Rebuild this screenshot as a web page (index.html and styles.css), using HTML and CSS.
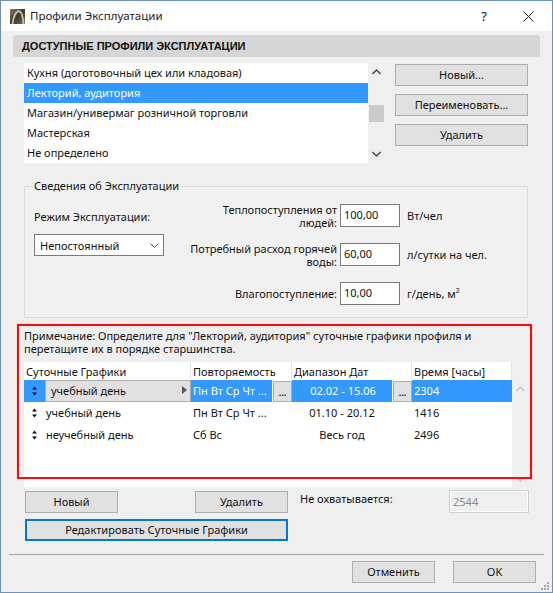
FILE: index.html
```html
<!DOCTYPE html>
<html lang="ru">
<head>
    <meta charset="UTF-8">
    <meta name="viewport" content="width=device-width, initial-scale=1.0">
    <title>Профили Эксплуатации</title>
    <link rel="stylesheet" href="styles.css">
</head>
<body>
    <div class="window">
        <div class="titlebar">
            <svg class="app-icon" width="15" height="15" viewBox="0 0 15 15">
                <defs>
                    <linearGradient id="icon-bg" x1="0" y1="0" x2="1" y2="1">
                        <stop offset="0" stop-color="#8a7c62"/>
                        <stop offset="0.5" stop-color="#3f3628"/>
                        <stop offset="1" stop-color="#7d7058"/>
                    </linearGradient>
                </defs>
                <rect width="15" height="15" fill="url(#icon-bg)"/>
                <path d="M2.500 15C3.500 8 5.500 2.500 9 2C12 2.500 13 8 13.500 15" fill="none" stroke="#c9bea6" stroke-width="1.800"/>
            </svg>
            <span class="title-text">Профили Эксплуатации</span>
            <span class="help-button">?</span>
            <svg class="close-button" width="11" height="11" viewBox="0 0 11 11">
                <path d="M0.500 0.500L10.500 10.500M10.500 0.500L0.500 10.500" stroke="#222" stroke-width="1"/>
            </svg>
        </div>

        <div class="section-head">ДОСТУПНЫЕ ПРОФИЛИ ЭКСПЛУАТАЦИИ</div>

        <div class="profiles">
            <ul class="profile-list">
                <li>Кухня (доготовочный цех или кладовая)</li>
                <li class="selected">Лекторий, аудитория</li>
                <li>Магазин/универмаг розничной торговли</li>
                <li>Мастерская</li>
                <li>Не определено</li>
            </ul>
            <div class="list-scroll">
                <svg width="9" height="6" viewBox="0 0 9 6"><path d="M0.500 5L4.500 1L8.500 5" fill="none" stroke="#555" stroke-width="1.600"/></svg>
                <div class="list-thumb"></div>
                <svg width="9" height="6" viewBox="0 0 9 6"><path d="M0.500 1L4.500 5L8.500 1" fill="none" stroke="#555" stroke-width="1.600"/></svg>
            </div>
            <div class="profile-actions">
                <button class="btn">Новый...</button>
                <button class="btn">Переименовать...</button>
                <button class="btn">Удалить</button>
            </div>
        </div>

        <fieldset class="info">
            <legend>Сведения об Эксплуатации</legend>
            <div class="info-left">
                <div class="mode-label">Режим Эксплуатации:</div>
                <div class="select">
                    <span>Непостоянный</span>
                    <svg width="9" height="5" viewBox="0 0 9 5"><path d="M0.500 0.500L4.500 4.500L8.500 0.500" fill="none" stroke="#555"/></svg>
                </div>
            </div>
            <div class="info-right">
                <label>Теплопоступления от людей:</label>
                <div class="field">100,00</div>
                <span>Вт/чел</span>
                <label>Потребный расход горячей воды:</label>
                <div class="field">60,00</div>
                <span>л/сутки на чел.</span>
                <label>Влагопоступление:</label>
                <div class="field">10,00</div>
                <span>г/день, м<sup>2</sup></span>
            </div>
        </fieldset>

        <div class="schedules">
            <p class="note">Примечание: Определите для "Лекторий, аудитория" суточные графики профиля и перетащите их в порядке старшинства.</p>
            <div class="table-wrap">
                <div class="table">
                    <div class="row head">
                        <div class="cell">Суточные Графики</div>
                        <div class="cell">Повторяемость</div>
                        <div class="cell">Диапазон Дат</div>
                        <div class="cell">Время [часы]</div>
                    </div>
                    <div class="row current">
                        <div class="cell name">
                            <span class="grip"><svg width="5" height="10" viewBox="0 0 5 10"><path d="M2.500 0.500L5 3.500H0ZM2.500 9.500L0 6.500H5Z" fill="#111"/></svg></span>
                            <div class="name-btn">учебный день<i class="arrow"></i></div>
                        </div>
                        <div class="cell split"><span class="fill">Пн Вт Ср Чт ...</span><button class="dots">...</button></div>
                        <div class="cell split"><span class="fill center">02.02 - 15.06</span><button class="dots">...</button></div>
                        <div class="cell fill">2304</div>
                    </div>
                    <div class="row">
                        <div class="cell name">
                            <span class="grip"><svg width="5" height="10" viewBox="0 0 5 10"><path d="M2.500 0.500L5 3.500H0ZM2.500 9.500L0 6.500H5Z" fill="#111"/></svg></span>
                            <span class="name-text">учебный день</span>
                        </div>
                        <div class="cell">Пн Вт Ср Чт ...</div>
                        <div class="cell date">01.10 - 20.12</div>
                        <div class="cell">1416</div>
                    </div>
                    <div class="row">
                        <div class="cell name">
                            <span class="grip"><svg width="5" height="10" viewBox="0 0 5 10"><path d="M2.500 0.500L5 3.500H0ZM2.500 9.500L0 6.500H5Z" fill="#111"/></svg></span>
                            <span class="name-text">неучебный день</span>
                        </div>
                        <div class="cell">Сб Вс</div>
                        <div class="cell date">Весь год</div>
                        <div class="cell">2496</div>
                    </div>
                </div>
                <div class="table-scroll">
                    <svg width="9" height="6" viewBox="0 0 9 6"><path d="M0.500 5L4.500 1L8.500 5" fill="none" stroke="#c8c8c8" stroke-width="1.600"/></svg>
                    <svg width="9" height="6" viewBox="0 0 9 6"><path d="M0.500 1L4.500 5L8.500 1" fill="none" stroke="#c8c8c8" stroke-width="1.600"/></svg>
                </div>
            </div>
            <div class="red-frame"></div>
        </div>

        <div class="schedule-actions">
            <div class="schedule-buttons">
                <button class="btn">Новый</button>
                <button class="btn">Удалить</button>
                <button class="btn focused">Редактировать Суточные Графики</button>
            </div>
            <div class="uncovered-label">Не охватывается:</div>
            <div class="field disabled">2544</div>
        </div>

        <div class="footer">
            <button class="btn">Отменить</button>
            <button class="btn">OK</button>
        </div>
        <svg class="grip-corner" width="10" height="10" viewBox="0 0 10 10" fill="#a8a8a8">
            <rect x="7" y="1" width="2" height="2"/>
            <rect x="4" y="4" width="2" height="2"/><rect x="7" y="4" width="2" height="2"/>
            <rect x="1" y="7" width="2" height="2"/><rect x="4" y="7" width="2" height="2"/><rect x="7" y="7" width="2" height="2"/>
        </svg>
    </div>
</body>
</html>
```

FILE: styles.css
```css
* {
    box-sizing: border-box;
}

body {
    margin: 0;
    background-color: #fff;
    font-family: "Noto Sans", sans-serif;
    font-size: 11px;
    color: #111;
}

.window {
    position: relative;
    width: 553px;
    height: 593px;
    border: 1px solid #6f92b3;
    background-color: #efefef;
    overflow: hidden;
}

.titlebar {
    display: flex;
    align-items: center;
    height: 30px;
    padding: 0 18px 0 9px;
    background-color: #fff;
}

.app-icon {
    margin-right: 5px;
}

.title-text {
    flex: 1;
    margin-bottom: 2px;
    font-size: 11.500px;
    color: #222;
}

.help-button {
    margin-right: 36px;
    font-size: 13px;
}

.section-head {
    height: 22px;
    margin: 4px 12px 0;
    padding-left: 9px;
    line-height: 22px;
    background-color: #d6d6d6;
    border-radius: 3px;
    font-family: "Liberation Sans", sans-serif;
    font-weight: bold;
    font-size: 11px;
}

.profiles {
    display: flex;
    margin: 6px 24px 0 23px;
}

.profile-list {
    width: 344px;
    height: 100px;
    margin: 0;
    padding: 0;
    list-style: none;
    background-color: #fff;
}

.profile-list li {
    height: 20px;
    padding-left: 3px;
    line-height: 19px;
}

.profile-list li.selected {
    background-color: #3399ff;
    color: #fff;
}

.list-scroll {
    display: flex;
    flex-direction: column;
    align-items: center;
    justify-content: space-between;
    width: 16px;
    height: 100px;
    padding: 6px 0;
}

.list-thumb {
    width: 15px;
    height: 17px;
    margin-top: 1px;
    background-color: #cbcbcb;
}

.profile-actions {
    display: flex;
    flex-direction: column;
    gap: 8px;
    width: 133px;
    margin: 1px 0 0 11px;
}

.btn {
    height: 22px;
    padding: 0 0 2px;
    border: 1px solid #adadad;
    background-color: #e1e1e1;
    font-family: inherit;
    font-size: 11px;
    color: #111;
}

.info {
    height: 139px;
    margin: 16px 24px 0 23px;
    padding: 0;
    display: flex;
    border: 1px solid #dcdcdc;
    background-color: #f1f1f1;
}

.info legend {
    margin-left: 8px;
    padding: 0 1px;
    line-height: 14px;
}

.info-left {
    width: 150px;
    padding: 16px 0 0 9px;
}

.mode-label {
    margin-bottom: 10px;
    white-space: nowrap;
}

.select {
    display: flex;
    align-items: center;
    justify-content: space-between;
    width: 130px;
    height: 22px;
    padding: 0 4px 0 5px;
    border: 1px solid #7a7a7a;
    background-color: #fff;
}

.info-right {
    display: grid;
    grid-template-columns: 165px 60px auto;
    grid-auto-rows: 23px;
    row-gap: 16px;
    align-items: center;
    padding: 11px 0 0 0;
}

.info-right label {
    padding: 0 3px 0 12px;
    text-align: right;
    line-height: 13px;
}

.info-right span {
    padding-left: 7px;
}

.info-right sup {
    font-size: 7px;
    line-height: 0;
}

.field {
    width: 60px;
    height: 23px;
    padding-left: 3px;
    line-height: 19px;
    border: 1px solid #7a7a7a;
    background-color: #fff;
}

.schedules {
    position: relative;
    height: 170px;
    margin: 0 24px 0 16px;
    padding: 11px 0 0 7px;
}

.note {
    margin: 0;
    height: 33px;
    line-height: 13px;
}

.table-wrap {
    display: flex;
}

.table {
    width: 488px;
    height: 125px;
    background-color: #fff;
}

.row {
    display: grid;
    grid-template-columns: 167px 101px 120px 100px;
    height: 22px;
}

.row.head {
    height: 18px;
}

.cell {
    display: flex;
    align-items: center;
    padding: 0 0 2px 2px;
    white-space: nowrap;
}

.row.head .cell {
    padding-bottom: 0;
    border-right: 1px solid #e4e4e4;
}

.center {
    justify-content: center;
}

.cell.date {
    justify-content: center;
    padding-left: 0;
    padding-right: 20px;
}

.cell.name,
.cell.split {
    padding: 0;
}

.grip {
    display: flex;
    align-items: center;
    justify-content: center;
    flex: none;
    width: 21px;
    align-self: stretch;
}

.name-text {
    margin: 0 0 2px 1px;
}

.current .grip,
.fill {
    background-color: #3399ff;
    color: #fff;
}

.name-btn {
    position: relative;
    flex: 1;
    height: 22px;
    padding-left: 5px;
    line-height: 20px;
    border: 1px solid #adadad;
    background-color: #e1e1e1;
    color: #111;
}

.arrow {
    position: absolute;
    right: 3px;
    top: 5px;
    border-left: 5px solid #555;
    border-top: 4px solid transparent;
    border-bottom: 4px solid transparent;
}

.split .fill {
    flex: 1;
    display: flex;
    align-items: center;
    align-self: stretch;
    padding: 0 0 2px 2px;
}

.dots {
    width: 19px;
    height: 21px;
    padding: 2px 0 0;
    margin-left: 1px;
    border: 1px solid #adadad;
    background-color: #e1e1e1;
    font-family: inherit;
    font-size: 9px;
    font-weight: bold;
    color: #111;
}

.table-scroll {
    display: flex;
    flex-direction: column;
    align-items: center;
    justify-content: space-between;
    width: 17px;
    height: 96px;
    margin-top: 24px;
    margin-left: 1px;
}

.red-frame {
    position: absolute;
    left: 0;
    top: 6px;
    width: 515px;
    height: 155px;
    border: 2px solid #ee1111;
    box-shadow: 0 0 1px #ff8888;
    pointer-events: none;
}

.schedule-actions {
    display: flex;
    align-items: flex-start;
    height: 66px;
    margin-left: 24px;
    padding-top: 3px;
}

.schedule-buttons {
    display: grid;
    grid-template-columns: 93px 93px;
    justify-content: space-between;
    row-gap: 6px;
    width: 263px;
}

.schedule-buttons .focused {
    grid-column: 1 / 3;
    border: 2px solid #0078d7;
}

.uncovered-label {
    width: 149px;
    margin-left: 12px;
}

.field.disabled {
    width: 80px;
    margin-top: -1px;
    line-height: 21px;
    border: 1px solid #d0d0d0;
    box-shadow: inset 0 0 0 1px #fff;
    background-color: #efefef;
    color: #8a8a8a;
}

.footer {
    display: flex;
    justify-content: flex-end;
    gap: 18px;
    margin: 0 8px;
    padding: 6px 8px 0 0;
    border-top: 1px solid #a0a0a0;
}

.footer .btn {
    width: 83px;
    height: 22px;
}

.grip-corner {
    position: absolute;
    right: 2px;
    bottom: 1px;
}
```
